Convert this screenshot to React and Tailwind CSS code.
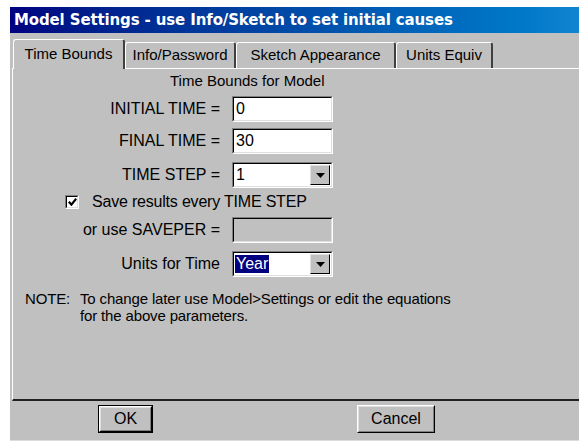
import React from "react";

const sans = { fontFamily: '"Liberation Sans", Arial, sans-serif' };

// sunken 3d frame used by text boxes and combo boxes
const Field = ({ children, disabled, width = "w-[101px]" }) => (
  <div className={`${width} h-[26px] border border-t-[#808080] border-l-[#808080] border-r-white border-b-white`}>
    <div
      className={`h-full flex items-center border border-t-black border-l-black border-r-[#dfdfdf] border-b-[#dfdfdf] ${
        disabled ? "bg-[#c0c0c0]" : "bg-white"
      }`}
    >
      {children}
    </div>
  </div>
);

const DropButton = () => (
  <div className="ml-auto mr-[1px] w-[20px] h-[20px] bg-[#c0c0c0] border border-t-[#dfdfdf] border-l-[#dfdfdf] border-r-black border-b-black flex items-center justify-center">
    <svg width="9" height="5" viewBox="0 0 9 5">
      <path d="M0 0h9L4.5 5z" fill="#000" />
    </svg>
  </div>
);

const Row = ({ label, children, className = "" }) => (
  <div className={`flex items-center ${className}`}>
    <div className="w-[207px] text-right text-[16px] leading-[18px]">{label}</div>
    <div className="ml-[12px]">{children}</div>
  </div>
);

const Tab = ({ label, active }) =>
  active ? (
    <div className="relative z-10 mb-[-1px] h-[30px] w-[112px] bg-[#c0c0c0] border-l border-t border-white border-r-2 border-r-[#404040] rounded-t-[3px] flex items-center justify-center text-[15px]">
      {label}
    </div>
  ) : (
    <div className="h-[26px] bg-[#c0c0c0] border-l border-t border-white border-r-2 border-r-[#404040] rounded-t-[3px] flex items-center justify-center px-[6px] text-[15px]">
      {label}
    </div>
  );

export default function App() {
  return (
    <div className="w-[579px] h-[441px] bg-white overflow-hidden pl-[10px] pt-[7px]" style={sans}>
      <div className="h-full bg-[#c0c0c0] flex flex-col text-black">
        <div className="h-[26px] shrink-0 bg-gradient-to-r from-[#000080] to-[#1084d0] flex items-center pl-[4px]">
          <span
            className="text-white font-bold text-[15px] leading-none tracking-[-0.13px]"
            style={{ fontFamily: '"DejaVu Sans", Verdana, sans-serif' }}
          >
            Model Settings - use Info/Sketch to set initial causes
          </span>
        </div>

        <div className="h-[35px] shrink-0 flex items-end pl-[3px]">
          <Tab label="Time Bounds" active />
          <div className="flex items-end">
            <div className="w-[111px]"><Tab label="Info/Password" /></div>
            <div className="w-[160px]"><Tab label="Sketch Appearance" /></div>
            <div className="w-[97px]"><Tab label="Units Equiv" /></div>
          </div>
        </div>

        <div className="ml-[2px] flex-1 border-l border-t border-white border-b-2 border-b-[#202020] pt-[3px]">
          <div className="pl-[157px] text-[15px] leading-[17px]">Time Bounds for Model</div>

          <Row label="INITIAL TIME =" className="mt-[7px]">
            <Field><span className="pl-[2px] text-[16px]">0</span></Field>
          </Row>
          <Row label="FINAL TIME =" className="mt-[6px]">
            <Field><span className="pl-[2px] text-[16px]">30</span></Field>
          </Row>
          <Row label="TIME STEP =" className="mt-[8px]">
            <Field>
              <span className="pl-[2px] text-[16px]">1</span>
              <DropButton />
            </Field>
          </Row>

          <div className="mt-[7px] flex items-center pl-[52px] h-[14px]">
            <div className="w-[14px] h-[14px] border border-t-[#808080] border-l-[#808080] border-r-white border-b-white">
              <div className="h-full bg-white border border-t-black border-l-black border-r-[#dfdfdf] border-b-[#dfdfdf] flex items-center justify-center">
                <svg width="9" height="8" viewBox="0 0 9 8">
                  <path d="M0.8 3.8 L3.4 6.6 L8.2 0.8" stroke="#000" strokeWidth="2.2" fill="none" />
                </svg>
              </div>
            </div>
            <span className="ml-[13px] text-[16px] leading-[18px] tracking-[-0.2px]">Save results every TIME STEP</span>
          </div>

          <Row label="or use SAVEPER =" className="mt-[8px]">
            <Field disabled />
          </Row>
          <Row label="Units for Time" className="mt-[8px]">
            <Field>
              <span className="ml-[1px] bg-[#000080] text-white text-[16px] leading-[18px] px-[1px]">Year</span>
              <DropButton />
            </Field>
          </Row>

          <div className="mt-[13px] pl-[12px] text-[15px] leading-[17px] tracking-[-0.15px]">
            <div className="flex">
              <span className="w-[55px]">NOTE:</span>
              <span>To change later use Model&gt;Settings or edit the equations</span>
            </div>
            <div className="pl-[55px]">for the above parameters.</div>
          </div>
        </div>

        <div className="h-[40px] shrink-0 flex items-start pt-[4px] border-b border-[#dcdcdc]">
          <div className="ml-[88px] w-[55px] h-[28px] border border-black">
            <div className="h-full border border-t-white border-l-white border-r-black border-b-black">
              <div className="h-full border border-t-[#dfdfdf] border-l-[#dfdfdf] border-r-[#808080] border-b-[#808080] flex items-center justify-center text-[16px]">
                OK
              </div>
            </div>
          </div>
          <div className="ml-[204px] w-[78px] h-[28px] border border-t-white border-l-white border-r-black border-b-black">
            <div className="h-full border border-t-[#dfdfdf] border-l-[#dfdfdf] border-r-[#808080] border-b-[#808080] flex items-center justify-center text-[16px]">
              Cancel
            </div>
          </div>
        </div>
      </div>
    </div>
  );
}
